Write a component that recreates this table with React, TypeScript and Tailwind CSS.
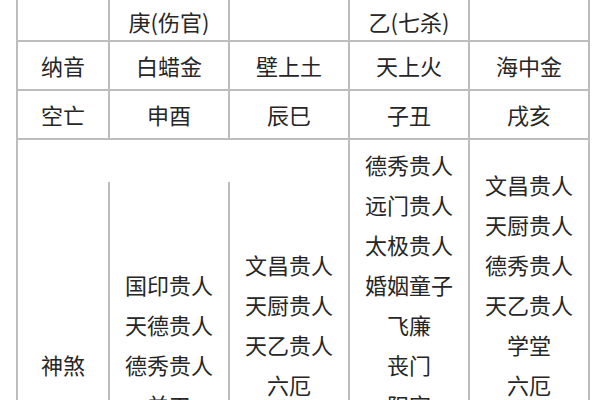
import React from "react";

const CELL = "flex items-center justify-center border-r-2 border-b-2 border-[#bdbdbd]";

const SHENSHA: string[][] = [
    ["国印贵人", "天德贵人", "德秀贵人", "羊刃", "金舆"],
    ["文昌贵人", "天厨贵人", "天乙贵人", "六厄", "劫煞", "亡神"],
    ["德秀贵人", "远门贵人", "太极贵人", "婚姻童子", "飞廉", "丧门", "阳宅", "孤辰", "血刃", "披麻", "勾绞"],
    ["文昌贵人", "天厨贵人", "德秀贵人", "天乙贵人", "学堂", "六厄", "劫煞", "寡宿", "元辰", "灾煞"],
];

export default function App() {
    return (
        <div
            className="w-[600px] h-[400px] overflow-hidden bg-white text-[22px] text-[#262626]"
            style={{ fontFamily: '"Noto Sans CJK SC", "Noto Sans", sans-serif' }}
        >
            <div className="ml-[16px] grid grid-cols-[92px_120px_120px_120px_120px] border-l-2 border-[#bdbdbd]">
                {/* top row (cut off above) */}
                <div className={`${CELL} h-[42px]`} />
                <div className={`${CELL} h-[42px] pt-[2px]`}>庚(伤官)</div>
                <div className={`${CELL} h-[42px]`} />
                <div className={`${CELL} h-[42px] pt-[2px]`}>乙(七杀)</div>
                <div className={`${CELL} h-[42px]`} />

                <div className={`${CELL} h-[49px]`}>纳音</div>
                <div className={`${CELL} h-[49px]`}>白蜡金</div>
                <div className={`${CELL} h-[49px]`}>壁上土</div>
                <div className={`${CELL} h-[49px]`}>天上火</div>
                <div className={`${CELL} h-[49px]`}>海中金</div>

                <div className={`${CELL} h-[49px]`}>空亡</div>
                <div className={`${CELL} h-[49px]`}>申酉</div>
                <div className={`${CELL} h-[49px]`}>辰巳</div>
                <div className={`${CELL} h-[49px]`}>子丑</div>
                <div className={`${CELL} h-[49px]`}>戌亥</div>

                {/* 神煞 row: first two dividers start lower */}
                <div className="flex h-[448px] items-center justify-center bg-[linear-gradient(to_bottom,transparent_42px,#bdbdbd_42px)] bg-[length:2px_100%] bg-right bg-no-repeat pr-[2px]">
                    神煞
                </div>
                <div className="flex h-[448px] flex-col items-center justify-center bg-[linear-gradient(to_bottom,transparent_42px,#bdbdbd_42px)] bg-[length:2px_100%] bg-right bg-no-repeat pr-[2px] leading-[40px]">
                    {SHENSHA[0].map((s) => <span key={s}>{s}</span>)}
                </div>
                {SHENSHA.slice(1).map((col, i) => (
                    <div key={i} className="flex h-[448px] flex-col items-center justify-center border-r-2 border-[#bdbdbd] leading-[40px]">
                        {col.map((s) => <span key={s}>{s}</span>)}
                    </div>
                ))}
            </div>
        </div>
    );
}
